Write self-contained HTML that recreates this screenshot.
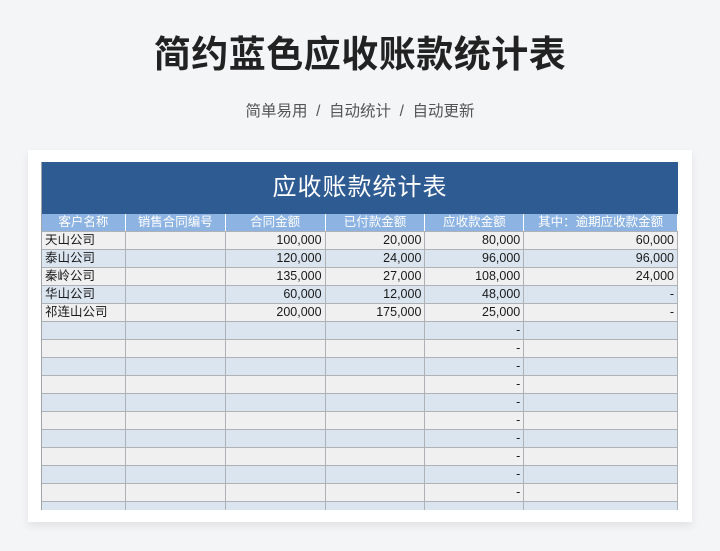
<!DOCTYPE html>
<html><head><meta charset="utf-8"><style>
*{margin:0;padding:0;box-sizing:border-box}
body{width:720px;height:551px;background:#f4f5f7;font-family:"Liberation Sans","Noto Sans CJK SC",sans-serif;position:relative;overflow:hidden}
.t{position:absolute;left:0;width:720px;text-align:center;top:29px;font-size:37px;font-weight:bold;color:#222;line-height:52px;letter-spacing:0.5px}
.s{position:absolute;left:0;width:720px;text-align:center;top:102px;font-size:15.5px;color:#555;line-height:20px}
.card{position:absolute;left:28px;top:150px;width:664px;height:372px;background:#fff;box-shadow:0 4px 8px rgba(0,0,0,0.08)}
.tb{position:absolute;left:41px;top:162px;width:637px;height:348px;overflow:hidden;border-left:1px solid #a0a4a8}
.band{height:52px;background:#2f5b93;color:#fff;font-size:24px;text-align:center;line-height:52px;letter-spacing:1px}
.r{display:flex;height:18px;border-bottom:1px solid #aeb2b6}
.r div{border-right:1px solid #aeb2b6;font-size:12.5px;line-height:17px;padding:0 3px;color:#1a1a1a;white-space:nowrap;overflow:hidden}
.h{background:#8db3e2}
.h div{color:#fff;text-align:center;border-right:1px solid #fff}
.a{background:#f0f0f0}.b{background:#dbe5f0}
.c1{width:84px}.c2{width:100px}.c3{width:100px;text-align:right}.c4{width:100px;text-align:right}.c5{width:99px;text-align:right}.c6{width:154px;text-align:right}
</style></head><body>
<div class="t">简约蓝色应收账款统计表</div>
<div class="s">简单易用 &nbsp;/ &nbsp;自动统计 &nbsp;/ &nbsp;自动更新</div>
<div class="card"></div>
<div class="tb">
<div class="band">应收账款统计表</div>
<div class="r h"><div class="c1">客户名称</div><div class="c2">销售合同编号</div><div class="c3" style="text-align:center">合同金额</div><div class="c4" style="text-align:center">已付款金额</div><div class="c5" style="text-align:center">应收款金额</div><div class="c6" style="text-align:center">其中：逾期应收款金额</div></div>
<div class="r a"><div class="c1">天山公司</div><div class="c2"></div><div class="c3">100,000</div><div class="c4">20,000</div><div class="c5">80,000</div><div class="c6">60,000</div></div>
<div class="r b"><div class="c1">泰山公司</div><div class="c2"></div><div class="c3">120,000</div><div class="c4">24,000</div><div class="c5">96,000</div><div class="c6">96,000</div></div>
<div class="r a"><div class="c1">秦岭公司</div><div class="c2"></div><div class="c3">135,000</div><div class="c4">27,000</div><div class="c5">108,000</div><div class="c6">24,000</div></div>
<div class="r b"><div class="c1">华山公司</div><div class="c2"></div><div class="c3">60,000</div><div class="c4">12,000</div><div class="c5">48,000</div><div class="c6">-</div></div>
<div class="r a"><div class="c1">祁连山公司</div><div class="c2"></div><div class="c3">200,000</div><div class="c4">175,000</div><div class="c5">25,000</div><div class="c6">-</div></div>
<div class="r b"><div class="c1"></div><div class="c2"></div><div class="c3"></div><div class="c4"></div><div class="c5">-</div><div class="c6"></div></div>
<div class="r a"><div class="c1"></div><div class="c2"></div><div class="c3"></div><div class="c4"></div><div class="c5">-</div><div class="c6"></div></div>
<div class="r b"><div class="c1"></div><div class="c2"></div><div class="c3"></div><div class="c4"></div><div class="c5">-</div><div class="c6"></div></div>
<div class="r a"><div class="c1"></div><div class="c2"></div><div class="c3"></div><div class="c4"></div><div class="c5">-</div><div class="c6"></div></div>
<div class="r b"><div class="c1"></div><div class="c2"></div><div class="c3"></div><div class="c4"></div><div class="c5">-</div><div class="c6"></div></div>
<div class="r a"><div class="c1"></div><div class="c2"></div><div class="c3"></div><div class="c4"></div><div class="c5">-</div><div class="c6"></div></div>
<div class="r b"><div class="c1"></div><div class="c2"></div><div class="c3"></div><div class="c4"></div><div class="c5">-</div><div class="c6"></div></div>
<div class="r a"><div class="c1"></div><div class="c2"></div><div class="c3"></div><div class="c4"></div><div class="c5">-</div><div class="c6"></div></div>
<div class="r b"><div class="c1"></div><div class="c2"></div><div class="c3"></div><div class="c4"></div><div class="c5">-</div><div class="c6"></div></div>
<div class="r a"><div class="c1"></div><div class="c2"></div><div class="c3"></div><div class="c4"></div><div class="c5">-</div><div class="c6"></div></div>
<div class="r b"><div class="c1"></div><div class="c2"></div><div class="c3"></div><div class="c4"></div><div class="c5"></div><div class="c6"></div></div>
</div>
</body></html>
